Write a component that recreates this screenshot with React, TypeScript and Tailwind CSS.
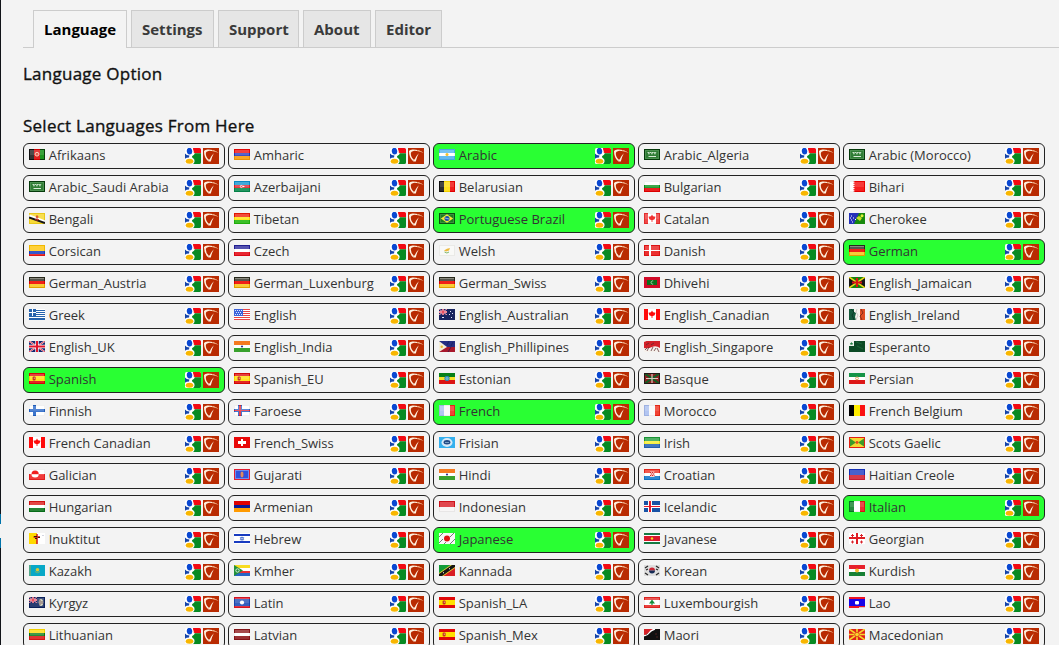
import React from "react";

type Shape = [string, number, number, number, number];

const stripesH = (...c: string[]): Shape[] => {
  const edges = c.length === 3 ? [0, 4, 7, 11] : c.map((_, i) => Math.round((i * 11) / c.length)).concat(11);
  return c.map((f, i) => [f, 0, edges[i], 16, edges[i + 1] - edges[i]]);
};
const stripesV = (...c: string[]): Shape[] => {
  const edges = [0, 5, 11, 16];
  return c.map((f, i) => [f, edges[i], 0, edges[i + 1] - edges[i], 11]);
};
const cross = (bg: string, outer: string, inner: string): Shape[] => [
  [bg, 0, 0, 16, 11],
  [outer, 4, 0, 4, 11],
  [outer, 0, 4, 16, 3],
  [inner, 5, 0, 2, 11],
  [inner, 0, 5, 16, 1],
];

const Dot = ({ c, x = 8, y = 5.5, r = 2 }: { c: string; x?: number; y?: number; r?: number }) => (
  <circle cx={x} cy={y} r={r} fill={c} />
);

function UnionJack({ w = 16, h = 11 }: { w?: number; h?: number }) {
  return (
    <svg width={w} height={h} viewBox="0 0 16 11" preserveAspectRatio="none">
      <rect width="16" height="11" fill="#14266e" />
      <path d="M0 0L16 11M16 0L0 11" stroke="#fff" strokeWidth="1.7" />
      <path d="M0 0L16 11M16 0L0 11" stroke="#e0203a" strokeWidth=".9" />
      <path d="M8 0V11M0 5.5H16" stroke="#fff" strokeWidth="3.4" />
      <path d="M8 0V11M0 5.5H16" stroke="#e0142c" strokeWidth="2" />
    </svg>
  );
}

type FlagDef = { s: Shape[]; x?: React.ReactNode; gloss?: boolean };

const saudi: FlagDef = {
  s: [["#053a0b", 0, 0, 16, 11], ["#4b9150", 1, 1, 14, 9], ["#2f7d35", 2, 2, 12, 7]],
  x: (
    <>
      <path d="M3.5 3.5H12.5M4 4.8H6M7 4.8H9M10 4.8H12" stroke="#c8e2c8" strokeWidth="1.1" strokeDasharray="1.8 .4" />
      <path d="M4.5 7.5H12" stroke="#d8ead8" strokeWidth="1" />
    </>
  ),
};
const german: FlagDef = {
  s: [
    ["#28281c", 0, 0, 16, 4],
    ["#d80000", 0, 4, 16, 3],
    ["#e0a000", 0, 7, 16, 4],
    ["#8a8a80", 1, 1, 14, 1],
    ["#55554c", 1, 2, 14, 2],
    ["#f02018", 1, 4, 14, 3],
    ["#f8cc38", 1, 7, 14, 3],
  ],
};
const maple = (side: string, gloss: boolean): FlagDef => ({
  gloss,
  s: [["#fff", 0, 0, 16, 11], [side, 0, 0, 4, 11], [side, 12, 0, 4, 11]],
  x: <path d="M8 1.5L9 3.3L11.5 3.8L10.6 6.2L8.4 7.3V9H7.6V7.3L5.4 6.2L4.5 3.8L7 3.3Z" fill={side} />,
});
const spain = (gloss: boolean): FlagDef => ({
  gloss,
  s: [["#e00808", 0, 0, 16, 11], ["#ffe000", 0, 3, 16, 5]],
  x: (
    <>
      <rect x="3.6" y="3.5" width="3" height="4" rx="1" fill="#c4301c" />
      <rect x="4.8" y="4.6" width="1" height="1.2" fill="#f2b7a0" />
    </>
  ),
});
const india: FlagDef = { s: stripesH("#f47a20", "#fff", "#38a12c"), x: <Dot c="#33338c" r={1.1} /> };
const france: FlagDef = { gloss: true, s: stripesV("#a8bdf0", "#fafafa", "#f02a18") };

const flags: Record<string, FlagDef> = {
  Afrikaans: {
    gloss: true,
    s: stripesV("#181818", "#dc0000", "#008800"),
    x: (
      <>
        <circle cx="8" cy="5.2" r="1.9" fill="#e2604f" stroke="#ffd8cc" strokeWidth=".9" />
        <path d="M5 .5H.5V10.5H5M11 .5H15.5V10.5H11" fill="none" stroke="#111" strokeOpacity=".6" />
      </>
    ),
  },
  Amharic: { gloss: true, s: stripesH("#f00808", "#2538bd", "#f79b08") },
  Arabic: { gloss: true, s: stripesH("#4fb1f0", "#fff", "#4fb1f0"), x: <Dot c="#f4c12d" r={1.5} /> },
  Arabic_Algeria: saudi,
  "Arabic (Morocco)": saudi,
  "Arabic_Saudi Arabia": saudi,
  Azerbaijani: {
    gloss: true,
    s: stripesH("#0b91cf", "#e01e28", "#04884b"),
    x: (
      <>
        <circle cx="7.4" cy="5.5" r="1.1" fill="none" stroke="#fff" strokeWidth=".8" />
        <Dot c="#fff" x={9.7} r={0.8} />
      </>
    ),
  },
  Belarusian: { gloss: true, s: stripesV("#101010", "#ffdc00", "#ee0000") },
  Bulgarian: { gloss: true, s: stripesH("#fff", "#069018", "#e80000") },
  Bihari: {
    gloss: true,
    s: [["#f50000", 0, 0, 16, 11], ["#fff", 0, 0, 4, 11]],
    x: <path d="M4 0L6 1L4 2.2L6 3.3L4 4.4L6 5.5L4 6.6L6 7.7L4 8.8L6 10L4 11Z" fill="#fff" />,
  },
  Bengali: {
    gloss: true,
    s: [["#f7d51c", 0, 0, 16, 11]],
    x: (
      <>
        <path d="M0 3L16 9" stroke="#fff" strokeWidth="3.4" />
        <path d="M0 4.4L16 10" stroke="#151515" strokeWidth="2" />
        <path d="M6 6.6Q8 8 10 6.4M8 2.2V7M6.8 4H9.5" stroke="#d02818" strokeWidth=".9" fill="none" />
      </>
    ),
  },
  Tibetan: { gloss: true, s: stripesH("#f01800", "#ffe200", "#22b80c") },
  "Portuguese Brazil": {
    s: [["#0b4d10", 0, 0, 16, 11], ["#3b8f40", 1, 1, 14, 9], ["#1a8020", 2, 2, 12, 7]],
    x: (
      <>
        <path d="M8 1.2L14.2 5.5L8 9.8L1.8 5.5Z" fill="#f7e838" />
        <Dot c="#164fa8" r={2.5} />
        <path d="M6 5L10 6" stroke="#cfe0ff" strokeWidth=".7" />
      </>
    ),
  },
  Catalan: maple("#f03030", true),
  Cherokee: {
    s: [["#17890c", 0, 0, 16, 11]],
    x: (
      <>
        <path d="M0 0H10L5 11H0Z" fill="#2531b8" />
        <path d="M2 3H3M2 7H3M4 5H5M6 6.5H7M1 5H2M3 9H4" stroke="#fff" />
        <path d="M7 5L10 3L13 5L11 8Z" fill="#c8df28" />
        <Dot c="#dff03a" x={13} y={2.8} r={1.5} />
      </>
    ),
  },
  Corsican: { gloss: true, s: [["#ffc400", 0, 0, 16, 6], ["#1640c4", 0, 6, 16, 3], ["#e81818", 0, 9, 16, 2]] },
  Czech: { gloss: true, s: stripesH("#23209a", "#fff", "#e50a16") },
  Welsh: {
    gloss: true,
    s: [["#f9f9f6", 0, 0, 16, 11]],
    x: (
      <>
        <path d="M5 5.5L8 3.7L11 3L10 5.5L7 6.5Z" fill="#edb93c" />
        <path d="M5.5 7Q8 9 10 7" stroke="#7eb870" fill="none" />
      </>
    ),
  },
  Danish: { gloss: true, s: [["#e91414", 0, 0, 16, 11], ["#fff", 5, 0, 2, 11], ["#fff", 0, 5, 16, 1]] },
  German: german,
  German_Austria: german,
  German_Luxenburg: german,
  German_Swiss: german,
  Dhivehi: {
    s: [["#d00b28", 0, 0, 16, 11], ["#08701c", 3, 3, 10, 5]],
    x: <path d="M9.2 4A1.6 1.6 0 1 0 9.2 7" stroke="#cfe8cf" fill="none" strokeWidth=".8" />,
  },
  English_Jamaican: {
    s: [["#16810c", 0, 0, 16, 11]],
    x: (
      <>
        <path d="M0 0L7 5.5L0 11ZM16 0L9 5.5L16 11Z" fill="#161616" />
        <path d="M0 0L16 11M16 0L0 11" stroke="#e9d81a" strokeWidth="1.5" />
        <path d="M8 1V10M3 5.5H13" stroke="#d81414" strokeWidth="2" />
      </>
    ),
  },
  Greek: {
    s: [
      ["#fff", 0, 0, 16, 11],
      ["#2563ad", 0, 1, 16, 1],
      ["#2563ad", 0, 3, 16, 1],
      ["#2563ad", 0, 5, 16, 1],
      ["#2563ad", 0, 7, 16, 1],
      ["#2563ad", 0, 9, 16, 2],
      ["#2563ad", 0, 0, 7, 7],
      ["#fff", 3, 0, 1, 7],
      ["#fff", 0, 3, 7, 1],
    ],
  },
  English: {
    s: [
      ["#fff", 0, 0, 16, 11],
      ["#e84444", 0, 0, 16, 1],
      ["#e84444", 0, 2, 16, 1],
      ["#e84444", 0, 4, 16, 1],
      ["#e84444", 0, 6, 16, 1],
      ["#e84444", 0, 8, 16, 1],
      ["#e84444", 0, 10, 16, 1],
      ["#3c62da", 0, 0, 9, 7],
    ],
    x: <path d="M1 1.5H8M2 3.5H8M1 5.5H8" stroke="#dce6ff" strokeWidth="1" strokeDasharray="1 1" />,
  },
  English_Australian: {
    s: [["#18245f", 0, 0, 16, 11]],
    x: (
      <>
        <UnionJack w={8} h={6} />
        <path d="M3 8.5H5M11 2.5H12M10 5.5H11M13 4.5H14M12 8.5H13" stroke="#e3e7ff" strokeWidth="1.2" />
      </>
    ),
  },
  English_Canadian: maple("#ff0a0a", false),
  "French Canadian": maple("#ff0a0a", false),
  English_Ireland: {
    s: stripesV("#165c3c", "#f8f5ed", "#df4c24"),
    x: (
      <>
        <path d="M0 0L7 4L6 8L7 11H0Z" fill="#165c3c" />
        <path d="M2 0L5 3L3 6L5 11" stroke="#0b3c27" fill="none" />
        <path d="M8 0L7 3L9 6L7 11" stroke="#c8cbc5" fill="none" />
        <path d="M12 0L14 4L11 7L13 11" stroke="#832c1c" fill="none" />
      </>
    ),
  },
  English_UK: { s: [], x: <UnionJack /> },
  English_India: india,
  Hindi: india,
  English_Phillipines: {
    s: [["#242d82", 0, 0, 16, 6], ["#a8182c", 0, 6, 16, 5]],
    x: (
      <>
        <path d="M0 0L8 6L0 11Z" fill="#f4eed8" />
        <Dot c="#e9bb32" x={2.7} y={5.7} r={1.2} />
        <path d="M10 0L8 4M14 1L12 5M12 6L9 11" stroke="#111a4f" strokeOpacity=".6" />
      </>
    ),
  },
  English_Singapore: {
    s: [["#f5f1ec", 0, 0, 16, 11]],
    x: (
      <>
        <path d="M0 1Q4 -1 8 0H16V7Q12 4 8 6T0 7Z" fill="#d32129" />
        <path d="M2 4L5 2M7 4L10 2M5 6L3 10M9 6L7 10M13 7L15 11M1 9L3 7M10 10L12 7" stroke="#5b2a2c" strokeOpacity=".75" />
      </>
    ),
  },
  Esperanto: {
    s: [["#0b4a25", 0, 0, 16, 11], ["#eef4ed", 0, 0, 5, 5]],
    x: (
      <>
        <path d="M2.5 1L3.1 2.1L4.2 2.3L3.4 3.1L3.5 4.2L2.5 3.6L1.5 4.2L1.6 3.1L.8 2.3L1.9 2.1Z" fill="#238044" />
        <path d="M7 1L13 3M8 5L14 8" stroke="#227143" strokeOpacity=".7" />
      </>
    ),
  },
  Spanish: spain(true),
  Spanish_EU: spain(true),
  Spanish_LA: spain(false),
  Spanish_Mex: spain(false),
  Estonian: { s: stripesH("#078018", "#f6e128", "#dc1414"), x: <circle cx="8" cy="5.5" r="2.2" fill="#68b7c8" stroke="#2682ba" /> },
  Basque: {
    s: [["#8e1e20", 0, 0, 16, 11]],
    x: (
      <>
        <path d="M0 0L16 11M16 0L0 11" stroke="#145c24" strokeWidth="2.2" />
        <path d="M8 1V10M2 5.5H14" stroke="#d8c8bf" strokeWidth="1.2" />
        <rect x=".5" y=".5" width="15" height="10" fill="none" stroke="#241816" />
      </>
    ),
  },
  Persian: { s: stripesH("#169447", "#fff", "#dd1717"), x: <circle cx="8" cy="5.4" r="1.4" fill="#fff" stroke="#dda25c" /> },
  Finnish: { gloss: true, s: [["#fff", 0, 0, 16, 11], ["#2464c5", 4, 0, 3, 11], ["#2464c5", 0, 4, 16, 3]] },
  Faroese: { gloss: true, s: cross("#fff", "#2d65cb", "#e32837") },
  French: france,
  Morocco: france,
  "French Belgium": { s: stripesV("#000", "#ffec00", "#fb1010") },
  French_Swiss: { s: [["#e80808", 0, 0, 16, 11], ["#fff", 7, 2, 2, 7], ["#fff", 4, 4, 8, 3]] },
  Frisian: {
    s: [["#35b0ee", 0, 0, 16, 11]],
    x: (
      <>
        <ellipse cx="8" cy="5.5" rx="5.5" ry="4.4" fill="#d9eaf8" />
        <ellipse cx="8" cy="5.2" rx="3.4" ry="2.2" fill="#234b85" />
        <path d="M6 5.5H10" stroke="#9fc4e1" strokeWidth=".7" />
      </>
    ),
  },
  Irish: { gloss: true, s: stripesH("#1c9c38", "#f7ed25", "#2664b8") },
  "Scots Gaelic": {
    s: [["#e32012", 0, 0, 16, 11], ["#f4d932", 1, 1, 14, 9]],
    x: (
      <>
        <path d="M1 1.5L7 5.5L1 9.5ZM15 1.5L9 5.5L15 9.5Z" fill="#3c9b29" />
        <Dot c="#e44d1f" r={1.4} />
      </>
    ),
  },
  Galician: {
    gloss: true,
    s: [["#fff", 0, 0, 16, 5], ["#f02020", 0, 5, 16, 6]],
    x: (
      <>
        <path d="M2.5 5.2A3.6 3.6 0 0 1 9.7 5.2Z" fill="#f02020" />
        <path d="M2.5 5.2A3.6 3.2 0 0 0 9.7 5.2Z" fill="#fff" />
      </>
    ),
  },
  Gujarati: {
    s: [["#e31d31", 0, 0, 16, 11], ["#6f8cf0", 1, 1, 14, 9], ["#3052df", 2, 2, 12, 7]],
    x: (
      <>
        <ellipse cx="8" cy="5.4" rx="1.6" ry="3" fill="#ce645c" />
        <path d="M8 3V8" stroke="#f0cb72" strokeWidth=".8" />
      </>
    ),
  },
  Croatian: {
    gloss: true,
    s: stripesH("#f0281c", "#fff", "#1378cb"),
    x: (
      <>
        <rect x="6" y="2.5" width="4.5" height="5.5" fill="#f7d5d0" />
        <path d="M6 3.5H10.5M7 5H10.5M6 6.5H10.5" stroke="#dc2020" strokeDasharray="1.2 .8" />
      </>
    ),
  },
  "Haitian Creole": { gloss: true, s: stripesH("#1634c0", "#d32033") },
  Hungarian: { gloss: true, s: stripesH("#dc1010", "#fff", "#08721a") },
  Armenian: { s: stripesH("#df0000", "#071b97", "#ff9a00") },
  Indonesian: { gloss: true, s: stripesH("#d9131c", "#f7f5f5") },
  Icelandic: { s: cross("#1852a5", "#fff", "#e31b2a") },
  Italian: { gloss: true, s: stripesV("#087c24", "#fff", "#e41616") },
  Inuktitut: {
    s: [["#ffd900", 0, 0, 8, 11], ["#fff", 8, 0, 8, 11]],
    x: (
      <>
        <path d="M8 1V11M4.5 4H11" stroke="#d01818" strokeWidth="1.5" />
        <path d="M5 3.5H8M6 5.5H8M9 4.5H11" stroke="#341710" />
        <Dot c="#8b93b2" x={14} y={2.5} r={0.5} />
      </>
    ),
  },
  Hebrew: {
    s: [["#fff", 0, 0, 16, 11], ["#183bc0", 0, 1, 16, 2], ["#183bc0", 0, 8, 16, 2]],
    x: <path d="M8 3.8L9.8 6.8H6.2ZM8 7.4L6.2 4.5H9.8Z" fill="none" stroke="#456acb" strokeWidth=".7" />,
  },
  Japanese: {
    s: [["#f7f7f7", 0, 0, 16, 11]],
    x: (
      <>
        <path d="M0 4L4 0M0 10L4 6M11 4L15 0M11 11L16 6M5 11L7 9" stroke="#777" strokeWidth="1" />
        <Dot c="#e01212" r={3} />
      </>
    ),
  },
  Javanese: {
    s: [["#167a43", 0, 0, 16, 2], ["#fff", 0, 2, 16, 1], ["#d9172b", 0, 3, 16, 5], ["#fff", 0, 8, 16, 1], ["#167a43", 0, 9, 16, 2]],
    x: <Dot c="#f5dc21" r={1.2} />,
  },
  Georgian: {
    s: [["#fff", 0, 0, 16, 11], ["#df1d24", 7, 0, 2, 11], ["#df1d24", 0, 4, 16, 2]],
    x: <path d="M3.5 1V4M2 2.5H5M12.5 1V4M11 2.5H14M3.5 7.5V10.5M2 9H5M12.5 7.5V10.5M11 9H14" stroke="#d9232b" />,
  },
  Kazakh: {
    s: [["#08a8c7", 0, 0, 16, 11], ["#55aa8b", 0, 0, 2, 11]],
    x: (
      <>
        <Dot c="#dbc833" x={8.5} y={4.8} r={1.8} />
        <path d="M6 6.5Q8.5 9 11 6.5" stroke="#79b769" fill="none" />
      </>
    ),
  },
  Kmher: {
    s: stripesH("#f8dc20", "#fff", "#ec2e34", "#2964c5"),
    x: (
      <>
        <path d="M0 0L9 5.5L0 11Z" fill="#23913b" />
        <circle cx="3.5" cy="5.5" r="1.7" fill="none" stroke="#e9f5e9" strokeWidth=".9" />
      </>
    ),
  },
  Kannada: {
    s: [["#119b38", 0, 0, 16, 11]],
    x: (
      <>
        <path d="M16 0V11H0Z" fill="#d91d24" />
        <path d="M0 11L16 0" stroke="#f0d735" strokeWidth="5" />
        <path d="M0 11L16 0" stroke="#151515" strokeWidth="3.5" />
        <path d="M4 8L5 7.5M10 4L11 3.5" stroke="#fff" />
      </>
    ),
  },
  Korean: {
    s: [["#dedede", 0, 0, 16, 11]],
    x: (
      <>
        <path d="M1 3L4 1M12 1L15 3M1 8L4 10M12 10L15 8M2 5L4 4M12 4L14 5" stroke="#292929" strokeWidth="1.3" />
        <path d="M5 5.5A3 3 0 0 1 11 5.5Z" fill="#c92433" />
        <path d="M5 5.5A3 3 0 0 0 11 5.5Z" fill="#172c56" />
      </>
    ),
  },
  Kurdish: { s: stripesH("#e7202b", "#fff", "#168034"), x: <Dot c="#f3b62a" r={2} /> },
  Kyrgyz: {
    gloss: true,
    s: [["#0c235e", 0, 0, 16, 11]],
    x: (
      <>
        <UnionJack w={8} h={6} />
        <ellipse cx="12" cy="5.5" rx="2.2" ry="3.5" fill="#d6d6bd" />
        <path d="M11 3V8M13 4V7" stroke="#775c68" />
      </>
    ),
  },
  Latin: { gloss: true, s: [["#df1626", 0, 0, 16, 11], ["#1848b5", 0, 2, 16, 7]], x: <Dot c="#fff" r={2.1} /> },
  Luxembourgish: {
    gloss: true,
    s: [["#e72724", 0, 0, 16, 11], ["#fff", 0, 3, 16, 5]],
    x: <path d="M8 2.5L11 6.5H8.6V8H7.4V6.5H5Z" fill="#168c3b" />,
  },
  Lao: {
    s: [["#ec1325", 0, 0, 16, 11], ["#1604e8", 0, 2, 16, 7]],
    x: (
      <>
        <rect x="6" y="4" width="4" height="3.5" rx="1" fill="#fff" />
        <path d="M10 10.5H16" stroke="#d9c8cd" />
      </>
    ),
  },
  Lithuanian: { gloss: true, s: stripesH("#ffdc00", "#087b18", "#dc1818") },
  Latvian: { gloss: true, s: [["#8c1518", 0, 0, 16, 11], ["#fff", 0, 4, 16, 3]] },
  Maori: {
    s: [["#101010", 0, 0, 16, 11]],
    x: (
      <>
        <path d="M0 0H10L0 7Z" fill="#d62228" />
        <path d="M0 6.5Q3 7 5 4T11 0" stroke="#fff" strokeWidth="1.3" fill="none" />
        <path d="M11 5H13M12 8H14" stroke="#4a2020" />
      </>
    ),
  },
  Macedonian: {
    s: [["#df2119", 0, 0, 16, 11]],
    x: (
      <>
        <path d="M0 0L16 11M16 0L0 11M8 0V11M0 5.5H16" stroke="#f5d52c" strokeWidth="1.7" />
        <circle cx="8" cy="5.5" r="2.3" fill="#f5d52c" stroke="#df2119" strokeWidth=".8" />
      </>
    ),
  },
};

function Flag({ name }: { name: string }) {
  const f = flags[name];
  return (
    <svg className="mt-[5px] mr-[3.7px] h-[11px] w-4 shrink-0" viewBox="0 0 16 11" aria-hidden="true">
      {f.s.map(([fill, x, y, w, h], i) => (
        <rect key={i} x={x} y={y} width={w} height={h} fill={fill} shapeRendering="crispEdges" />
      ))}
      {f.gloss && (
        <>
          <rect x="1" y="1" width="14" height="5" fill="#fff" fillOpacity=".12" />
          <rect x="1" y="1" width="14" height="9" fill="#fff" fillOpacity=".12" />
        </>
      )}
      {f.x}
      {f.gloss && <rect x=".5" y=".5" width="15" height="10" fill="none" stroke="#000" strokeOpacity=".06" />}
    </svg>
  );
}

function GoogleIcon() {
  return (
    <svg className="mt-1 h-4 w-4 shrink-0" viewBox="0 0 16 16" aria-hidden="true">
      <rect width="16" height="16" rx="1.5" fill="#fff" />
      <path d="M8 0H14.5Q16 0 16 1.5V5.2H9.8L8 3.8H9.2Q7.8 2 8 0Z" fill="#f20a12" />
      <path d="M9.8 5.2H16V14.5Q16 16 14.5 16H8.2Q10.2 13.8 9.4 11.8Q8.6 10.4 7.2 9.4Q6.6 8.6 7.6 7.8Q9.4 6.8 9.8 5.2Z" fill="#078a22" />
      <path d="M0 5.4Q1.4 7.2 4.4 7.6L4 9.6Q1.4 9.6 0 10.8Z" fill="#1644a8" />
      <ellipse cx="4.5" cy="3.2" rx="2.7" ry="3.4" fill="#0a48d2" transform="rotate(-8 4.5 3.2)" />
      <ellipse cx="4.5" cy="13.2" rx="3.8" ry="2.5" fill="#f8b600" />
    </svg>
  );
}

function SwooshIcon() {
  return (
    <svg className="mt-1 ml-0.5 h-4 w-4 shrink-0" viewBox="0 0 16 16" aria-hidden="true">
      <rect width="16" height="16" fill="#b92b02" />
      <path d="M1 3Q2 1.4 5 1.5Q11 1.6 15.5 4.8Q10 2.6 5.5 2.9Q3 3.1 2.8 5Q2.7 9 5.8 11.8L5.4 13.6Q.8 9.5 1 3Z" fill="#fff1df" />
      <path d="M10.8 5.2Q8.8 9 7.8 13.4L5.4 13.6L5.6 11.6L6.6 11.4Q8 8 10.8 5.2Z" fill="#fff1df" />
      <path d="M9 2.1Q12.5 2.8 15.5 4.8Q12.5 3.4 9 3Z" fill="#e79664" />
    </svg>
  );
}

const rows = [
  ["Afrikaans", "Amharic", "Arabic", "Arabic_Algeria", "Arabic (Morocco)"],
  ["Arabic_Saudi Arabia", "Azerbaijani", "Belarusian", "Bulgarian", "Bihari"],
  ["Bengali", "Tibetan", "Portuguese Brazil", "Catalan", "Cherokee"],
  ["Corsican", "Czech", "Welsh", "Danish", "German"],
  ["German_Austria", "German_Luxenburg", "German_Swiss", "Dhivehi", "English_Jamaican"],
  ["Greek", "English", "English_Australian", "English_Canadian", "English_Ireland"],
  ["English_UK", "English_India", "English_Phillipines", "English_Singapore", "Esperanto"],
  ["Spanish", "Spanish_EU", "Estonian", "Basque", "Persian"],
  ["Finnish", "Faroese", "French", "Morocco", "French Belgium"],
  ["French Canadian", "French_Swiss", "Frisian", "Irish", "Scots Gaelic"],
  ["Galician", "Gujarati", "Hindi", "Croatian", "Haitian Creole"],
  ["Hungarian", "Armenian", "Indonesian", "Icelandic", "Italian"],
  ["Inuktitut", "Hebrew", "Japanese", "Javanese", "Georgian"],
  ["Kazakh", "Kmher", "Kannada", "Korean", "Kurdish"],
  ["Kyrgyz", "Latin", "Spanish_LA", "Luxembourgish", "Lao"],
  ["Lithuanian", "Latvian", "Spanish_Mex", "Maori", "Macedonian"],
];

const selected = new Set(["Arabic", "Portuguese Brazil", "German", "Spanish", "French", "Italian", "Japanese"]);

function LanguageCard({ name }: { name: string }) {
  return (
    <button
      className={`flex h-[26px] items-start rounded-[6px] border border-[#222] pr-[5px] pl-[5px] text-left text-[13px] leading-[23px] text-[#333] ${
        selected.has(name) ? "bg-[#29ff33]" : "bg-[#f3f3f3]"
      }`}
    >
      <Flag name={name} />
      <span className="flex-1 whitespace-nowrap">{name}</span>
      <GoogleIcon />
      <SwooshIcon />
    </button>
  );
}

const tabs = [
  { label: "Language", width: "w-[94px]" },
  { label: "Settings", width: "w-[83px]" },
  { label: "Support", width: "w-[81px]" },
  { label: "About", width: "w-[68px]" },
  { label: "Editor", width: "w-[67px]" },
];

export default function App() {
  return (
    <div className="flex h-[645px] w-full overflow-hidden bg-[#f3f3f3] font-['Open_Sans',sans-serif]">
      <div className="flex w-px shrink-0 flex-col bg-[#111318]">
        <div className="mt-[514px] h-[10px] bg-[#0073aa]" />
        <div className="h-[14px] bg-[#f3f3f3]" />
        <div className="h-[10px] bg-[#0073aa]" />
      </div>
      <main className="min-w-0 flex-1 pl-[22px]">
        <nav className="flex h-12 gap-1 border-b border-[#ccc] pt-[10px] pl-[10px]">
          {tabs.map((t, i) => (
            <button
              key={t.label}
              className={`flex shrink-0 items-start justify-start border border-b-0 border-[#ccc] pt-[6px] pl-[10px] text-[15px] leading-6 font-bold ${t.width} ${
                i === 0 ? "-mb-px h-[38px] bg-[#f3f3f3] text-black" : "h-[37px] bg-[#e6e6e6] text-[#3a3a3a]"
              }`}
            >
              {t.label}
            </button>
          ))}
        </nav>
        <h2 className="mt-[14px] h-6 text-[17px] leading-6 font-normal tracking-[0.25px] text-[#111] [-webkit-text-stroke:0.35px_#111]">
          Language Option
        </h2>
        <h2 className="mt-7 h-6 text-[17px] leading-6 font-normal tracking-[0.25px] text-[#111] [-webkit-text-stroke:0.35px_#111]">
          Select Languages From Here
        </h2>
        <section className="mt-[5px] grid grid-cols-[repeat(5,202px)] gap-x-[3px] gap-y-[6px]">
          {rows.flat().map((name) => (
            <LanguageCard key={name} name={name} />
          ))}
        </section>
      </main>
    </div>
  );
}
